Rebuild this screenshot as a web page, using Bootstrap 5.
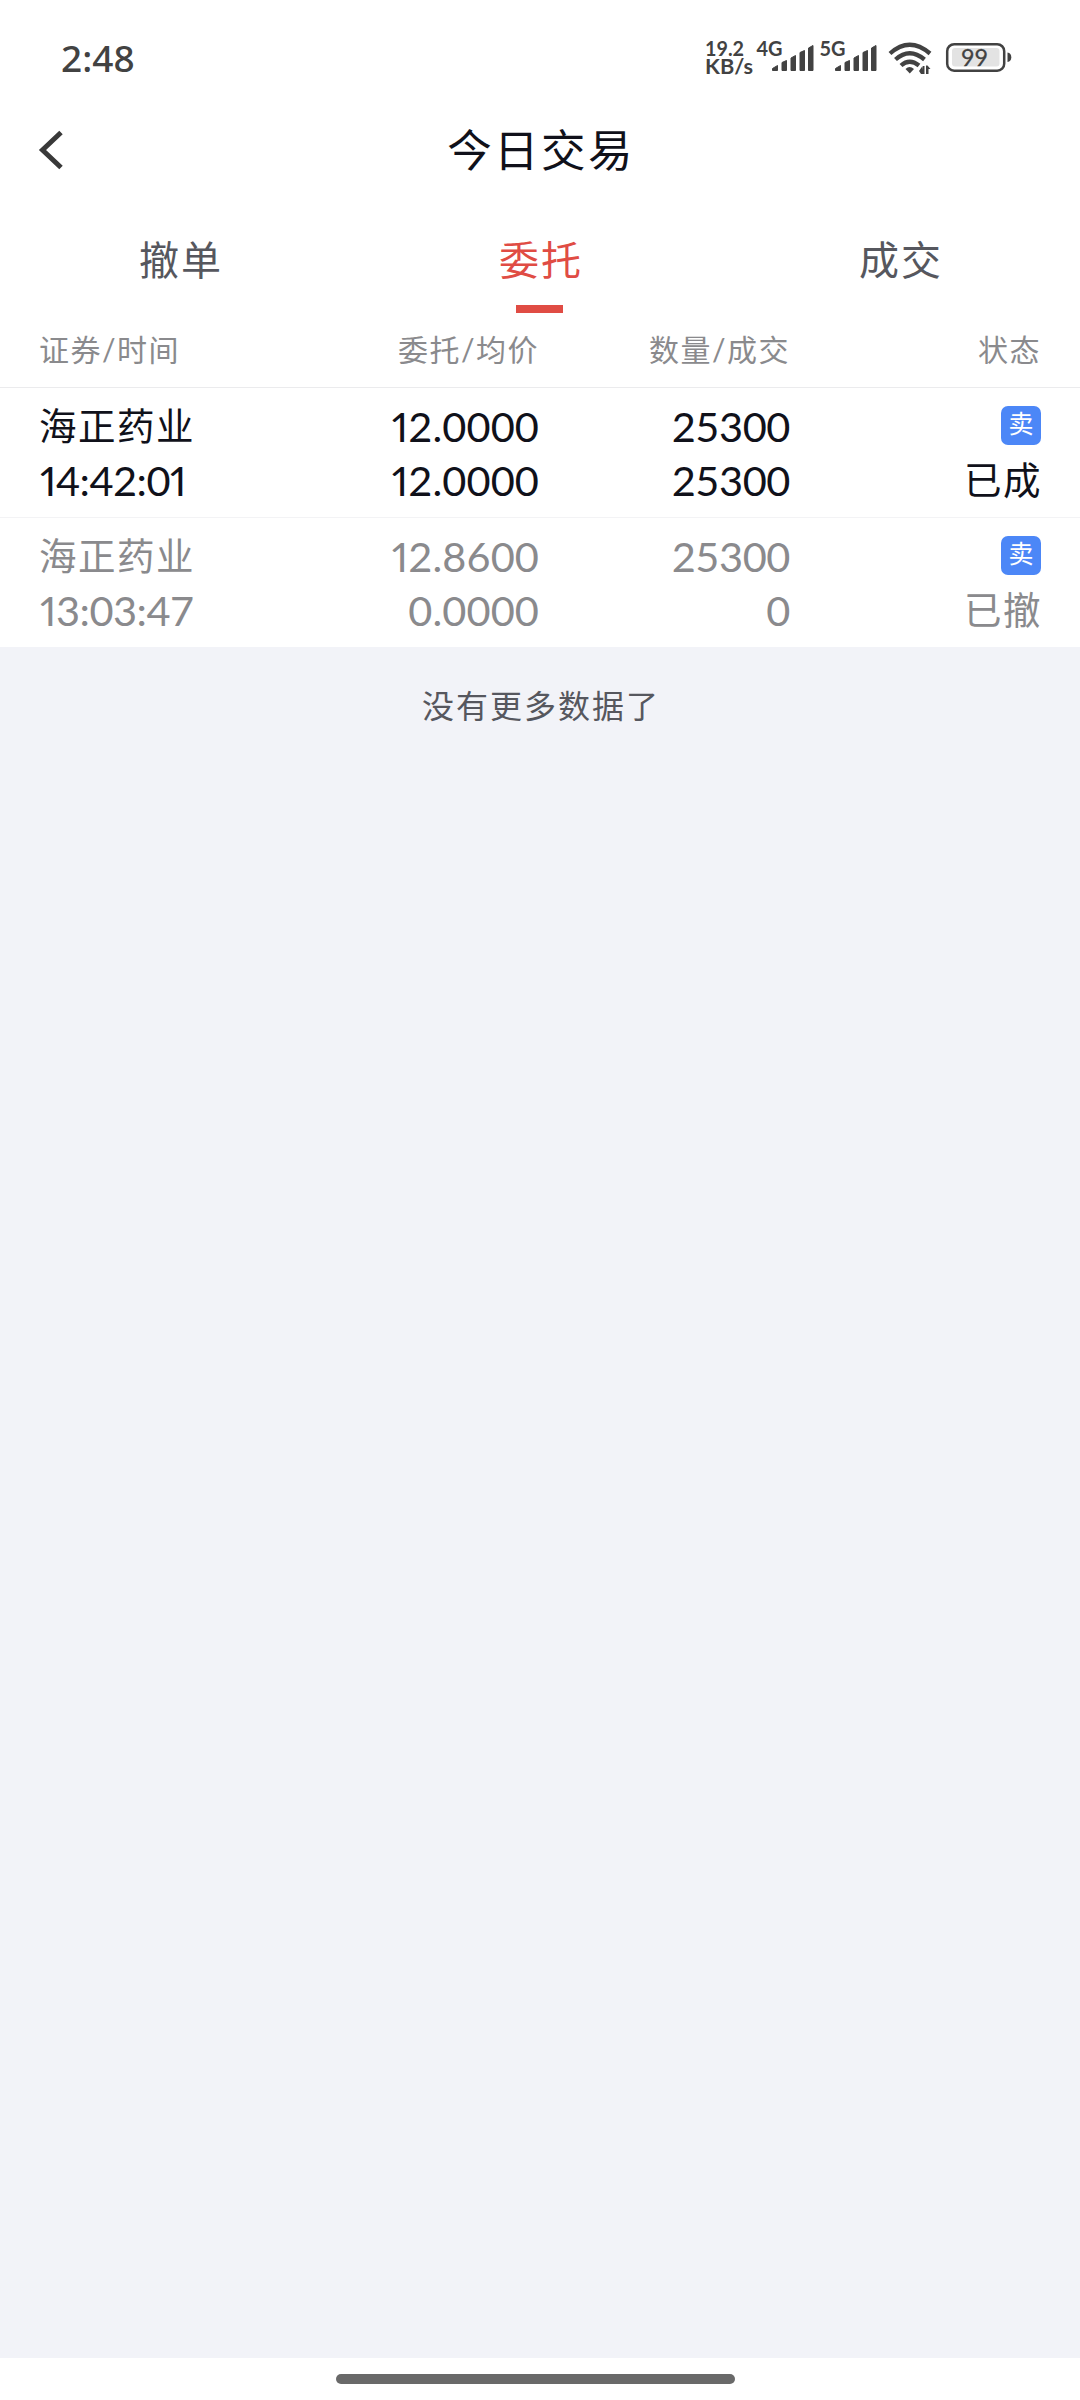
<!DOCTYPE html>
<html lang="zh-CN">
<head>
<meta charset="utf-8">
<meta name="viewport" content="width=device-width, initial-scale=1">
<title>今日交易</title>
<link href="https://cdn.jsdelivr.net/npm/bootstrap@5.3.0/dist/css/bootstrap.min.css" rel="stylesheet">
<style>
body{background:#f2f3f8;font-family:Lato,"Noto Sans CJK SC",sans-serif;color:#10111a;min-height:2400px}
.status-bar{height:112px;padding:20px 50px 0 61px}
.clock{font:500 37px/76px "Noto Sans",sans-serif;color:#424242}
.status-icons{display:block;width:340px;height:80px}
.title-bar{height:96px;padding:8px 0 0 2px}
.title-bar .back{width:28px;height:42px;left:37px}
.page-title{font-size:44.500px;line-height:60px;letter-spacing:2.400px;font-weight:400}
.order-tabs{height:105px}
.order-tabs .nav-link{color:#56575e;font-size:40px;line-height:60px;letter-spacing:2px;padding:22px 0 0 2px;height:105px;border:0}
.order-tabs .nav-link.active{color:#e04c44}
.order-tabs .nav-link.active::after{content:"";display:block;width:47px;height:8px;margin:15px auto 0;background:#e04c44;position:relative;left:-2px}
.order-grid{display:grid;padding:0 39px}
.cols{grid-template-columns:251px 249px 251px 251px}
.col-head{height:75px;border-bottom:1px solid #ebebed;font-size:30px;line-height:44px;letter-spacing:1.5px;color:#8a8a8d;padding-top:14px}
.order-row{height:130px;padding-top:11px;border-bottom:1px solid #f3f3f5;font-size:37.500px;line-height:54px}
.order-row:last-child{height:129px;border:0}
.order-row.cancelled{color:#8a8a8d}
.cjk{letter-spacing:1.500px}
.num{font-size:41.500px;letter-spacing:.1px}
.time{letter-spacing:-.5px;padding-left:1px}
.qty{letter-spacing:-.4px}
.pn{font-variant-numeric:proportional-nums}
.side{width:40px;height:39px;border-radius:7px;background:#4c87f7;color:#fff;font-size:25px;line-height:35px;margin:7px 0 8px}
.side+.cjk{margin-right:-1px}
.list-end{font-size:32px;line-height:48px;letter-spacing:2px;color:#56575e;padding:35px 0 0 2px}
.home-area{height:42px;padding-top:16px}
.home-pill{width:399px;height:10px;margin-left:336px;background:#696969}
</style>
</head>
<body class="d-flex flex-column">
<header class="bg-white">
  <div class="status-bar d-flex justify-content-between">
    <span class="clock">2:48</span>
    <svg class="status-icons" viewBox="0 0 340 80" fill="#424242" font-family="Lato,sans-serif" font-weight="700">
      <text x="15" y="36" font-size="21" textLength="39" lengthAdjust="spacingAndGlyphs">19.2</text>
      <text x="15" y="54" font-size="20" textLength="48" lengthAdjust="spacingAndGlyphs">KB/s</text>
      <text x="66.500" y="36" font-size="20" textLength="26" lengthAdjust="spacingAndGlyphs">4G</text>
      <text x="129.500" y="36" font-size="20" textLength="26" lengthAdjust="spacingAndGlyphs">5G</text>
      <g id="bars" stroke="#424242" stroke-width="1" stroke-linejoin="round">
        <path d="M82.500 48.500L87.500 45.500V50.500H82.500ZM92 42.500L96.500 40.500V50.500H92ZM101 38L105.500 35.500V50.500H101ZM110 32.500L114.500 30.500V50.500H110ZM118.500 28L123 25.500V50.500H118.500Z"/>
      </g>
      <use href="#bars" x="63"/>
      <g fill="none" stroke="#424242" stroke-width="4.300">
        <path d="M200 33.500Q219.500 16 240 33.500"/>
        <path d="M205.500 39.500Q219.500 27 234.500 39.500"/>
        <path d="M211 45.500Q219.500 38 229 45.500"/>
      </g>
      <path d="M215.500 49Q219.500 45 224 49L219.800 53.500Z"/>
      <path d="M229 51L232.500 46V54H231ZM233 46H234.500V54H232ZM236 45.500H237.500L240.500 49H238.500V54H236Z"/>
      <rect x="257.200" y="24.200" width="57" height="26.500" rx="7" fill="none" stroke="#424242" stroke-width="2.500"/>
      <rect x="262" y="28" width="47.500" height="18.500" rx="3" fill="#e3e3e3"/>
      <path d="M317.500 32.500Q321.300 33 321.300 37.300T317.500 42Z"/>
      <text x="271" y="45.500" font-size="23" font-weight="400" textLength="27" stroke="#424242" stroke-width=".3" lengthAdjust="spacingAndGlyphs">99</text>
    </svg>
  </div>
  <div class="title-bar position-relative">
    <svg class="back position-absolute top-0 mt-3" viewBox="0 0 28 42" fill="none" stroke="#393939" stroke-width="5"><path d="M24 4.500L5.500 22L24 39.500"/></svg>
    <h1 class="page-title text-center m-0">今日交易</h1>
  </div>
  <nav class="order-tabs nav nav-fill">
    <a class="nav-item nav-link" href="#">撤单</a>
    <a class="nav-item nav-link active" href="#">委托</a>
    <a class="nav-item nav-link" href="#">成交</a>
  </nav>
</header>
<main class="flex-grow-1">
  <section class="bg-white">
    <div class="order-grid cols col-head text-end">
      <span class="text-start">证券/时间</span><span>委托/均价</span><span>数量/成交</span><span>状态</span>
    </div>
    <div>
      <div class="order-grid cols order-row text-end">
        <div class="text-start"><div class="cjk">海正药业</div><div class="num time"><span class="pn">1</span>4<span class="pn">:</span>42<span class="pn">:</span>0<span class="pn">1</span></div></div>
        <div class="num"><span class="pn">1</span>2.0000<br><span class="pn">1</span>2.0000</div>
        <div class="num qty">25300<br>25300</div>
        <div><div class="side text-center ms-auto">卖</div><div class="cjk">已成</div></div>
      </div>
      <div class="order-grid cols order-row cancelled text-end">
        <div class="text-start"><div class="cjk">海正药业</div><div class="num time"><span class="pn">1</span>3<span class="pn">:</span>03<span class="pn">:</span>47</div></div>
        <div class="num"><span class="pn">1</span>2.8600<br>0.0000</div>
        <div class="num qty">25300<br>0</div>
        <div><div class="side text-center ms-auto">卖</div><div class="cjk">已撤</div></div>
      </div>
    </div>
  </section>
  <p class="list-end text-center m-0">没有更多数据了</p>
</main>
<footer class="home-area bg-white"><div class="home-pill rounded-pill"></div></footer>
<script src="https://cdn.jsdelivr.net/npm/bootstrap@5.3.0/dist/js/bootstrap.bundle.min.js"></script>
</body>
</html>
